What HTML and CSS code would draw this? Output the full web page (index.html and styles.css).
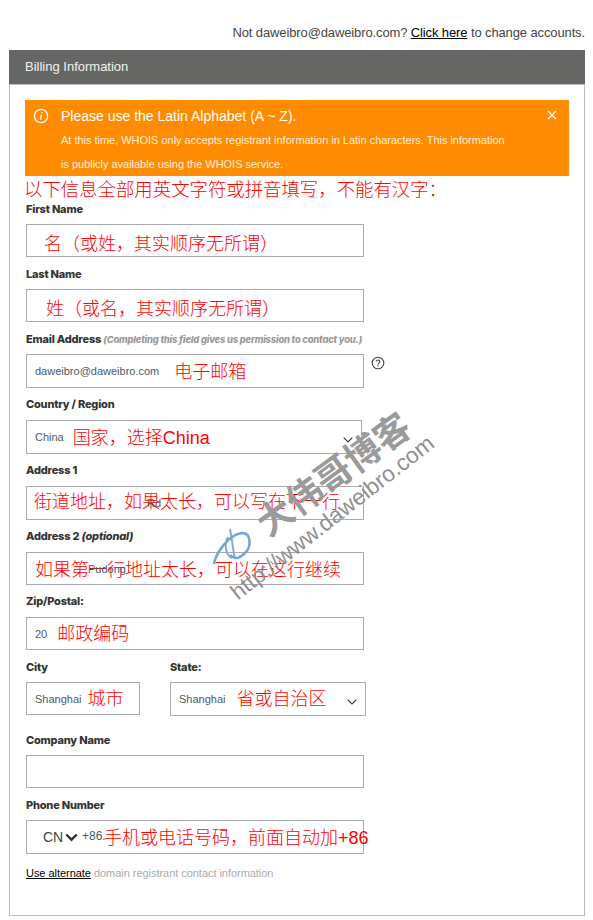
FILE: index.html
```html
<!DOCTYPE html>
<html lang="zh">
<head>
    <title>Billing Information</title>
    <link rel="stylesheet" href="styles.css">
</head>
<body>
    <p class="account-line">Not daweibro@daweibro.com? <a href="#">Click here</a> to change accounts.</p>

    <div class="panel-title">Billing Information</div>

    <div class="panel">
        <div class="alert">
            <svg class="alert-icon" width="16" height="16" viewBox="0 0 16 16">
                <circle cx="8" cy="8" r="6.6" fill="none" stroke="#fff" stroke-width="1.3"/>
                <path d="M8.9 4.3v.9M8.5 7 7.5 11.6" fill="none" stroke="#fff" stroke-width="1.4"/>
            </svg>
            <div class="alert-text">
                <div class="alert-heading">Please use the Latin Alphabet (A ~ Z).</div>
                <div class="alert-body">At this time, WHOIS only accepts registrant information in Latin characters. This information<br>is publicly available using the WHOIS service.</div>
            </div>
            <svg class="alert-close" width="10" height="10" viewBox="0 0 10 10">
                <path d="M1 1l8 8M9 1l-8 8" stroke="#fff" stroke-width="1.3"/>
            </svg>
        </div>

        <div class="note note-intro">以下信息全部用英文字符或拼音填写，不能有汉字：</div>

        <div class="group">
            <div class="label">First Name</div>
            <div class="field"><span class="note note-first">名（或姓，其实顺序无所谓）</span></div>
        </div>

        <div class="group">
            <div class="label">Last Name</div>
            <div class="field"><span class="note note-last">姓（或名，其实顺序无所谓）</span></div>
        </div>

        <div class="group group-tight">
            <div class="label">Email Address <em class="label-hint">(Completing this field gives us permission to contact you.)</em></div>
            <div class="field-row">
                <div class="field field-tall"><span class="value">daweibro@daweibro.com</span><span class="note note-email">电子邮箱</span></div>
                <svg class="help-icon" width="14" height="14" viewBox="0 0 14 14">
                    <circle cx="7" cy="7" r="5.8" fill="none" stroke="#444" stroke-width="1.1"/>
                    <path d="M5.2 5.5C5.3 3.4 8.9 3.5 8.9 5.5 8.9 6.900 7 6.900 7 8.400M7 9.300v1.200" fill="none" stroke="#444" stroke-width="1.1"/>
                </svg>
            </div>
        </div>

        <div class="group group-tight">
            <div class="label label-loose">Country / Region</div>
            <div class="field field-tall field-select"><span class="value">China</span><span class="note note-country">国家，选择China</span>
                <svg class="chevron" width="10" height="6" viewBox="0 0 10 6"><path d="M.7.7 5 5 9.300.7" fill="none" stroke="#333" stroke-width="1.1"/></svg>
            </div>
        </div>

        <div class="group group-tight">
            <div class="label label-loose">Address 1</div>
            <div class="field field-tall"><span class="value value-under value-road">Rd</span><span class="note note-addr1">街道地址，如果太长，可以写在下一行</span></div>
        </div>

        <div class="group group-tight">
            <div class="label label-loose">Address 2 <em>(optional)</em></div>
            <div class="field"><span class="value value-under value-pudong">Pudong</span><span class="note note-addr2">如果第一行地址太长，可以在这行继续</span></div>
        </div>

        <div class="group">
            <div class="label label-loose">Zip/Postal:</div>
            <div class="field"><span class="value">20</span><span class="note note-zip">邮政编码</span></div>
        </div>

        <div class="group group-location">
            <div class="city">
                <div class="label">City</div>
                <div class="field"><span class="value">Shanghai</span><span class="note note-city">城市</span></div>
            </div>
            <div class="state">
                <div class="label">State:</div>
                <div class="field field-tall field-select"><span class="value">Shanghai</span><span class="note note-state">省或自治区</span>
                    <svg class="chevron" width="10" height="6" viewBox="0 0 10 6"><path d="M.7.7 5 5 9.300.7" fill="none" stroke="#333" stroke-width="1.1"/></svg>
                </div>
            </div>
        </div>

        <div class="group">
            <div class="label">Company Name</div>
            <div class="field"></div>
        </div>

        <div class="group">
            <div class="label">Phone Number</div>
            <div class="field field-tall">
                <span class="phone-country">CN</span>
                <svg class="phone-chevron" width="13" height="9" viewBox="0 0 13 9"><path d="M1.300 1.500 6.500 6.700 11.700 1.500" fill="none" stroke="#333" stroke-width="2.400"/></svg>
                <span class="value value-under value-phone">+86.</span>
                <span class="note note-phone">手机或电话号码，前面自动加+86</span>
            </div>
        </div>

        <p class="alternate"><a href="#">Use alternate</a> domain registrant contact information</p>
    </div>

    <div class="watermark">
        <svg class="watermark-logo" width="44" height="44" viewBox="0 0 44 44">
            <path d="M18 3C20 13 21 24 23 33" fill="none" stroke="#7fadda" stroke-width="2"/>
            <path d="M16 11C13 16 12 28 20 32" fill="none" stroke="#7fadda" stroke-width="2"/>
            <path d="M2 38C4 26 18 8 30 7 40 7 39 22 33 27 29 31 24 35 18 29" fill="none" stroke="#74a6d6" stroke-width="2.600"/>
        </svg>
        <div class="watermark-name">大伟哥博客</div>
        <div class="watermark-url">http://www.daweibro.com</div>
    </div>
</body>
</html>
```

FILE: styles.css
```css
body {
    margin: 0;
    background-color: #fff;
    font-family: "Liberation Sans", Arial, sans-serif;
    color: #444;
    position: relative;
    height: 920px;
    overflow: hidden;
}

.account-line {
    margin: 0;
    padding: 25px 8px 0 0;
    height: 25px;
    line-height: 15px;
    font-size: 13px;
    letter-spacing: -0.12px;
    text-align: right;
}

.account-line a,
.alternate a {
    color: #000;
    text-decoration: underline;
}

.panel-title {
    margin: 0 8px 0 9px;
    height: 34px;
    padding-left: 16px;
    line-height: 34px;
    font-size: 13px;
    color: #f2f2f2;
    background-color: #666664;
}

.panel {
    margin: 0 8px 0 9px;
    height: 832px;
    box-sizing: border-box;
    padding: 15px 15px 0;
    border: 1px solid #bbb;
}

.alert {
    display: flex;
    height: 76px;
    background-color: #ff8c00;
    color: #fff;
}

.alert-icon {
    margin: 8px 0 0 8px;
    flex: none;
}

.alert-text {
    margin-left: 12px;
    padding-top: 6px;
    flex: 1;
}

.alert-heading {
    height: 22px;
    line-height: 20px;
    font-size: 14px;
}

.alert-body {
    line-height: 24px;
    font-size: 11px;
    letter-spacing: -0.02px;
    color: #ffeeda;
}

.alert-close {
    margin: 10px 12px 0 0;
    flex: none;
}

.note {
    margin-bottom: 2px;
    font-family: "Liberation Sans", "Noto Sans CJK SC", sans-serif;
    font-size: 18px;
    font-weight: 300;
    color: #f00;
    white-space: nowrap;
}

.note-intro {
    height: 26px;
    margin: 0 0 0 -1px;
    line-height: 27px;
    font-size: 18.4px;
}

.group {
    margin: 0 0 10px 1px;
}

.group-tight {
    margin-bottom: 9px;
}

.group-location {
    display: flex;
    margin-bottom: 17px;
}

.label {
    height: 14px;
    margin-bottom: 8px;
    line-height: 14px;
    font-family: Inter, sans-serif;
    font-size: 11px;
    font-weight: 800;
    letter-spacing: -0.2px;
    color: #333;
    white-space: nowrap;
}

.label-loose {
    margin-bottom: 9px;
}

.label-hint {
    font-size: 9.400px;
    color: #999;
}

.field {
    position: relative;
    display: flex;
    align-items: center;
    box-sizing: border-box;
    width: 338px;
    height: 33px;
    padding-left: 8px;
    border: 1px solid #aaa;
    background-color: #fff;
}

.field-tall {
    height: 34px;
}

.field-select {
    width: 336px;
}

.field-row {
    display: flex;
    align-items: flex-start;
}

.value {
    font-size: 11px;
    color: #4d5a6b;
}

/* these sit under the red notes in the reference */
.value-under {
    position: absolute;
}

.value-road {
    left: 120px;
}

.value-pudong {
    left: 61px;
}

.value-phone {
    left: 55px;
    top: 8px;
    font-size: 12px;
}

.note-first {
    margin: 2px 0 0 9px;
}

.note-last {
    margin: 2px 0 0 11px;
}

.note-email {
    margin-left: 15px;
}

.note-country {
    margin-left: 9px;
}

.note-addr1 {
    margin: 0 0 6px -1px;
}

.note-zip {
    margin: 0 0 4px 10px;
}

.note-city {
    margin: 0 0 4px 6px;
}

.note-state {
    margin: 0 0 4px 11px;
}

.note-phone {
    position: absolute;
    left: 77px;
}

.chevron {
    position: absolute;
    right: 8px;
    top: 16px;
}

.help-icon {
    margin: 2px 0 0 7px;
}

.city .field {
    width: 114px;
}

.city {
    width: 144px;
}

.state .field {
    width: 196px;
}

.phone-country {
    margin-left: 8px;
    font-size: 14px;
}

.phone-chevron {
    margin-left: 2px;
}

.alternate {
    margin: 12px 0 0 1px;
    line-height: 14px;
    font-size: 11px;
    letter-spacing: -0.04px;
    color: #aaa;
}

.watermark-logo,
.watermark-name,
.watermark-url {
    position: absolute;
    white-space: nowrap;
}

.watermark-logo {
    left: 212px;
    top: 526px;
}

.watermark-name {
    left: 242px;
    top: 450px;
    font-family: "Noto Sans CJK SC", sans-serif;
    font-size: 36px;
    font-weight: 700;
    line-height: 44px;
    color: #9a9a9a;
    transform: rotate(-36deg);
}

.watermark-url {
    left: 207px;
    top: 505px;
    font-size: 22.600px;
    line-height: 26px;
    color: #8f8f8f;
    transform: rotate(-38deg);
}
```
